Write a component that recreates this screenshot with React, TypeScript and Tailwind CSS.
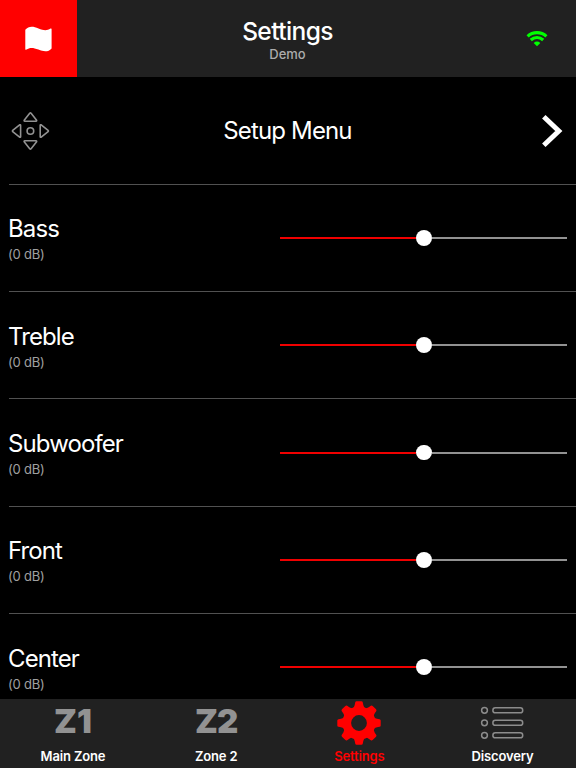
import React from "react";

const controls = ["Bass", "Treble", "Subwoofer", "Front", "Center"];
const toothAngles = [0, 45, 90, 135, 180, 225, 270, 315];
const arrowAngles = [0, 90, 180, 270];

function FlagIcon() {
  return (
    <svg width="28" height="26" viewBox="0 0 28 26" fill="#fff">
      <path d="M.3 3.8C3.5 .1 7.9.1 13.5 2.5c5.2 2.2 8.7 2.2 12 .1q1.1-.6 1.1.6v19.2C23.4 26.1 19 26 13.4 23.6 8.2 21.4 4.5 21.4 1.5 23.5q-1.2.7-1.2-.6Z" />
    </svg>
  );
}

function WifiIcon() {
  return (
    <svg width="22" height="17" viewBox="0 0 22 17" fill="none" stroke="#00ff00" strokeWidth="3.2">
      <path d="M1.6 6.3C6.9 1.4 15.1 1.4 20.4 6.3" />
      <path d="M4.8 10C8.5 6.7 13.5 6.7 17.2 10" />
      <path d="M11 16.3 7.7 12.9Q11 10.2 14.3 12.9Z" fill="#00ff00" stroke="none" />
    </svg>
  );
}

function PadIcon() {
  return (
    <svg width="40" height="40" viewBox="-20 -20 40 40" fill="none" stroke="#929292" strokeWidth="1.6" strokeLinejoin="round">
      <circle cx="0.4" r="3.3" />
      {arrowAngles.map((a) => (
        <path key={a} d="M-.7-17.7Q0-18.4.7-17.7L6.2-10.8Q6.5-9.8 5.7-9.8H-5.7Q-6.5-9.8-6.2-10.8Z" transform={`translate(0.4 0) rotate(${a})`} />
      ))}
    </svg>
  );
}

function GearIcon() {
  return (
    <svg width="44" height="44" viewBox="-22 -22 44 44" fill="#ff0000">
      <circle r="12.2" fill="none" stroke="#ff0000" strokeWidth="8.6" />
      {toothAngles.map((a) => (
        <path key={a} d="M-6.8-14Q-4.7-15.5-4.3-18L-3.8-20.5Q-3.6-21.7-2.4-21.7H2.4Q3.6-21.7 3.8-20.5L4.3-18Q4.7-15.5 6.8-14Z" transform={`rotate(${a})`} />
      ))}
    </svg>
  );
}

function ListIcon() {
  return (
    <svg width="44" height="34" viewBox="0 0 44 34" fill="none" stroke="#8c8c8c" strokeWidth="1.5">
      {[4.3, 16.8, 29.3].map((y) => (
        <g key={y}>
          <circle cx="4.5" cy={y} r="2.9" />
          <rect x="12.9" y={y - 2.5} width="29.8" height="5" rx="2.4" />
        </g>
      ))}
    </svg>
  );
}

function Slider() {
  return (
    <div className="mr-[9px] flex h-4 w-[287.5px] items-center">
      <div className="h-[2px] w-[136.5px] bg-[#f00000]" />
      <div className="size-[15.5px] shrink-0 rounded-full bg-white" />
      <div className="h-[2px] flex-1 bg-[#929292]" />
    </div>
  );
}

export default function App() {
  return (
    <div className="flex h-[768px] w-[576px] flex-col overflow-hidden bg-black font-['Inter','Liberation_Sans',sans-serif] text-white">
      <header className="grid h-[77px] shrink-0 grid-cols-[77px_1fr_78px] bg-[#212121]">
        <div className="flex items-center justify-center bg-[#ff0000]">
          <FlagIcon />
        </div>
        <div className="flex flex-col items-center pt-[16px]">
          <h1 className="text-[24.5px] leading-[31px] font-medium tracking-[-0.6px]">Settings</h1>
          <p className="text-[13px] leading-[14px] font-medium text-[#acacac]">Demo</p>
        </div>
        <div className="flex items-center justify-center pr-px">
          <WifiIcon />
        </div>
      </header>
      <main className="min-h-0 flex-1 overflow-hidden">
        <section className="grid h-[107.3px] grid-cols-[61px_1fr_61px] items-center">
          <div className="pl-[10px]">
            <PadIcon />
          </div>
          <h2 className="pt-px pr-px text-center text-[24px] leading-[30px] tracking-[-0.85px]">Setup Menu</h2>
          <div className="flex justify-end pr-[12px]">
            <svg width="24" height="32" viewBox="0 0 24 32" fill="none" stroke="#fff" strokeWidth="5">
              <path d="M3.8 1.8 18.8 16 3.8 30.2" />
            </svg>
          </div>
        </section>
        {controls.map((label) => (
          <section key={label} className="relative flex h-[107.3px] items-center justify-between pl-[9px]">
            <div className="absolute top-[-0.6px] right-0 left-0 ml-[9px] h-px bg-[#515151]" />
            <div>
              <h3 className="-ml-px pt-px text-[24px] leading-[32px] tracking-[-0.9px]">{label}</h3>
              <p className="-ml-px text-[13px] leading-[18px] tracking-[-0.2px] text-[#a0a0a0]">(0 dB)</p>
            </div>
            <Slider />
          </section>
        ))}
      </main>
      <nav className="flex h-[69.5px] shrink-0 justify-between bg-[#212121] pr-[2px] pl-[1.5px] text-[13px] font-semibold tracking-[-0.15px]">
        <div className="flex w-[143px] flex-col items-center">
          <div className="flex h-[49px] items-center pb-[2px] text-[33px] font-black tracking-[0px] text-[#929292]">Z1</div>
          <span className="leading-4">Main Zone</span>
        </div>
        <div className="flex w-[143px] flex-col items-center">
          <div className="flex h-[49px] items-center pb-[2px] text-[33px] font-black tracking-[-1px] text-[#929292]">Z2</div>
          <span className="leading-4">Zone 2</span>
        </div>
        <div className="flex w-[143px] flex-col items-center text-[#ff0000]">
          <div className="flex h-[49px] items-center pr-px"><GearIcon /></div>
          <span className="leading-4">Settings</span>
        </div>
        <div className="flex w-[143px] flex-col items-center">
          <div className="flex h-[49px] items-center pr-px"><ListIcon /></div>
          <span className="leading-4">Discovery</span>
        </div>
      </nav>
    </div>
  );
}
